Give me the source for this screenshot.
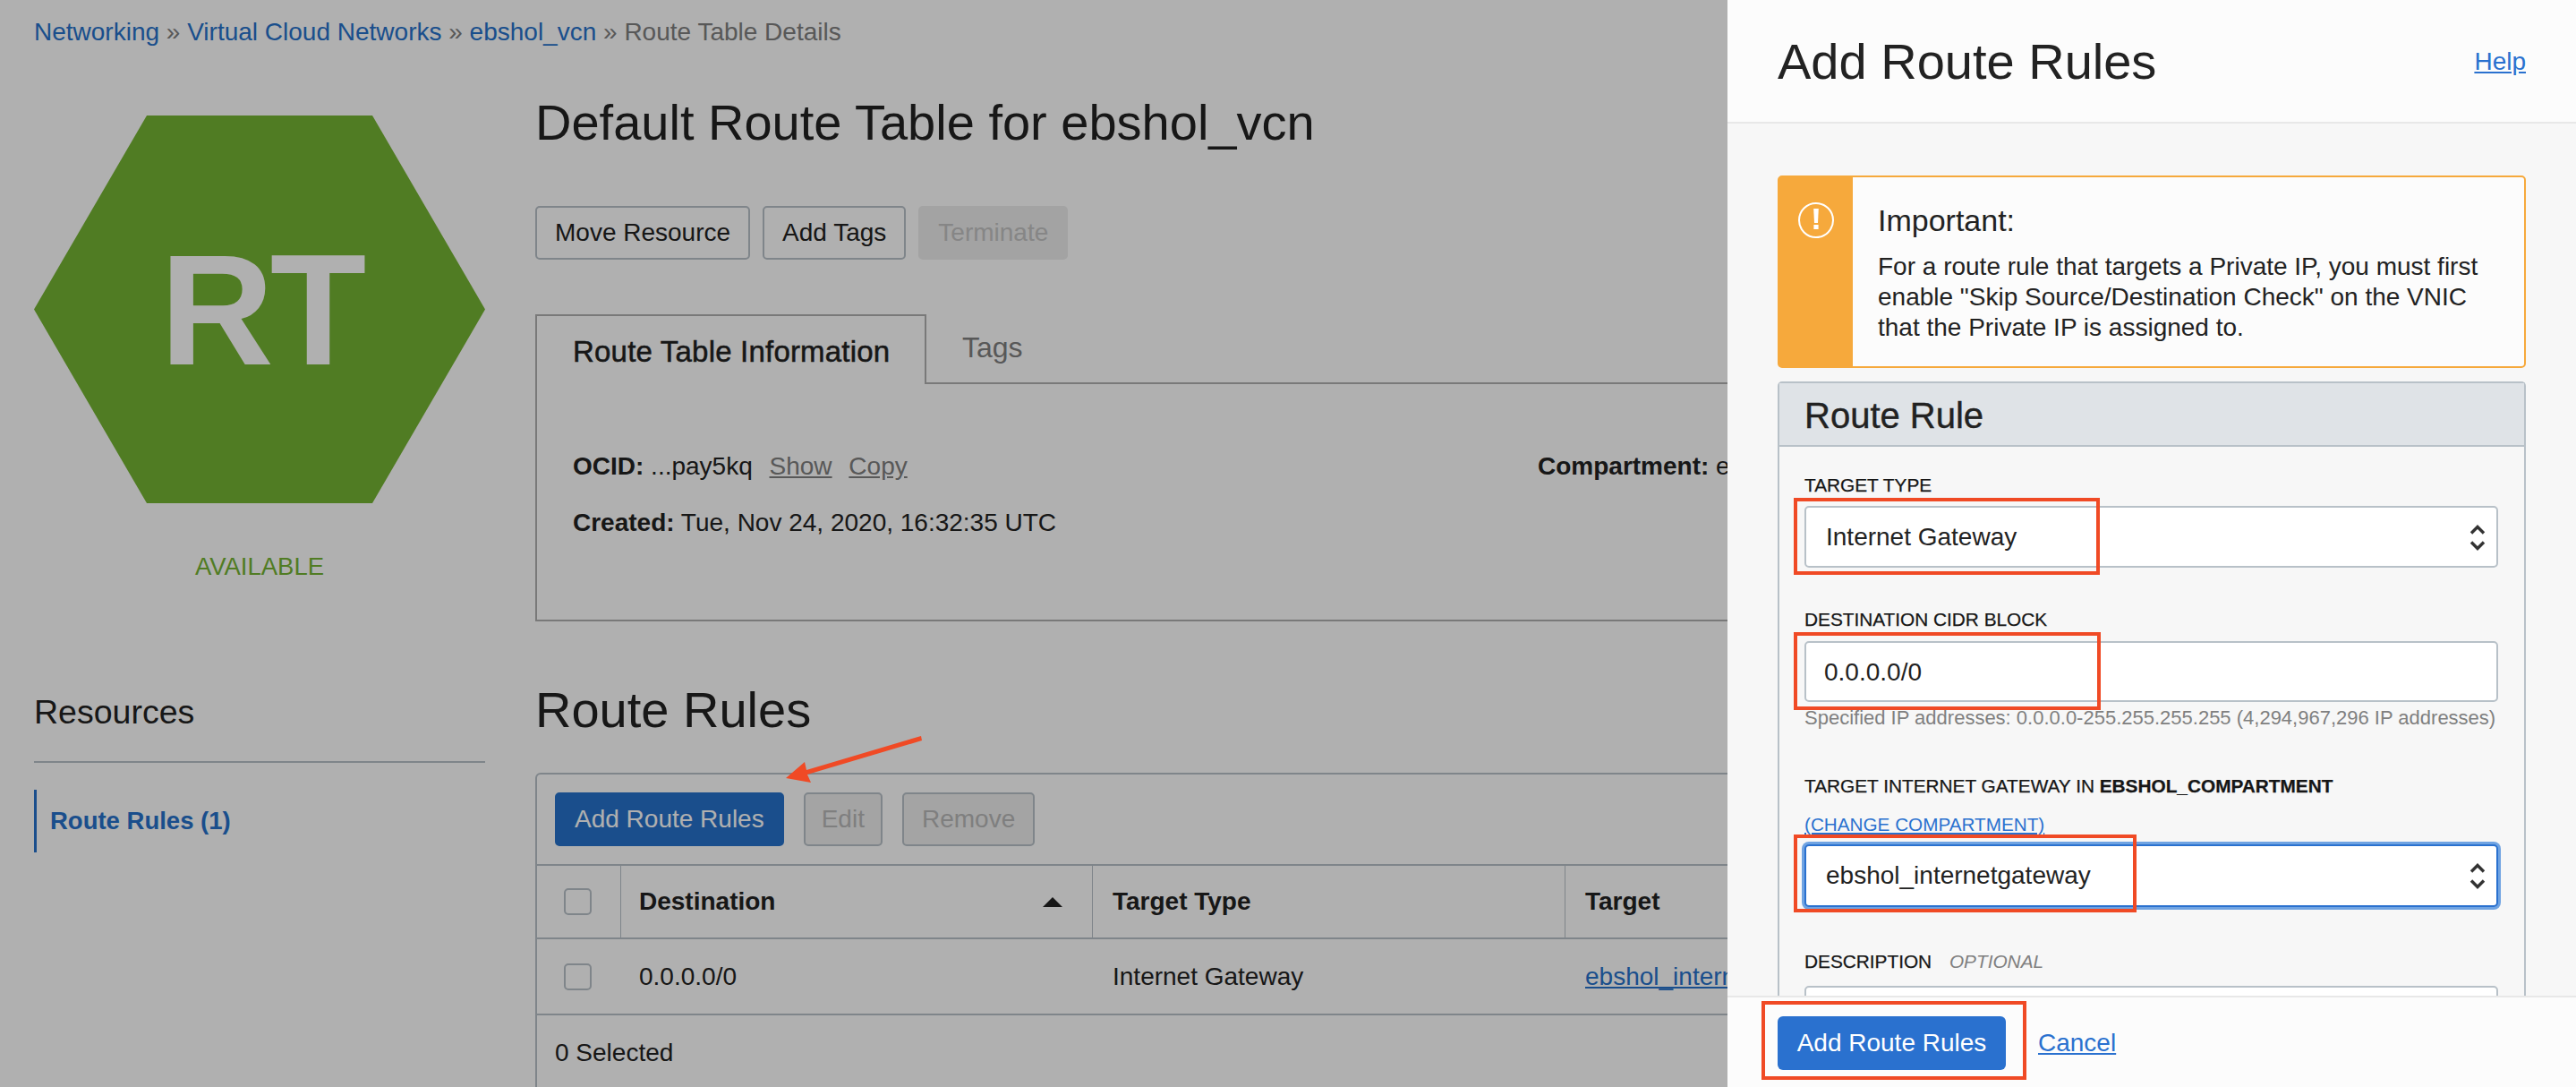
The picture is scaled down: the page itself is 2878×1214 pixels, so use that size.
<div class="page">
	<div class="crumbs">
		<a href="#n">Networking</a> <span>»</span> <a href="#n">Virtual Cloud Networks</a> <span>»</span> <a href="#n">ebshol_vcn</a> <span>» Route Table Details</span>
	</div>

	<div class="main">
		<aside class="side">
			<svg class="hex" viewBox="0 0 504 433" width="504" height="433">
				<polygon points="126,0 378,0 504,216.5 378,433 126,433 0,216.5" fill="#75b433" />
				<text x="254" y="278" text-anchor="middle" class="hex-text">RT</text>
			</svg>
			<div class="state">AVAILABLE</div>
			<h3 class="res">Resources</h3>
			<div class="res-item">Route Rules (1)</div>
		</aside>

		<section class="content">
			<h1>Default Route Table for ebshol_vcn</h1>
			<div class="actions">
				<button class="btn">Move Resource</button>
				<button class="btn">Add Tags</button>
				<button class="btn off">Terminate</button>
			</div>

			<div class="tabs">
				<div class="tab on">Route Table Information</div>
				<div class="tab">Tags</div>
			</div>
			<div class="info">
				<div class="info-row">
					<div class="info-left"><b>OCID:</b> ...pay5kq <u>Show</u> <u>Copy</u></div>
					<div class="comp"><b>Compartment:</b> e</div>
				</div>
				<div class="info-row second"><div><b>Created:</b> Tue, Nov 24, 2020, 16:32:35 UTC</div></div>
			</div>

			<h2>Route Rules</h2>
			<div class="table">
				<div class="toolbar">
					<button class="btn primary">Add Route Rules</button>
					<button class="btn dim edit">Edit</button>
					<button class="btn dim">Remove</button>
				</div>
				<div class="tr head">
					<div class="c0"><span class="check"></span></div>
					<div class="c1">Destination <i class="sort"></i></div>
					<div class="c2">Target Type</div>
					<div class="c3">Target</div>
				</div>
				<div class="tr body">
					<div class="c0"><span class="check"></span></div>
					<div class="c1">0.0.0.0/0</div>
					<div class="c2">Internet Gateway</div>
					<div class="c3"><a href="#n">ebshol_intern</a></div>
				</div>
				<div class="tfoot">0 Selected</div>
			</div>
		</section>
	</div>

	<div class="overlay"></div>

	<svg class="arrow" width="170" height="60" viewBox="0 0 170 60">
		<path d="M0 49 L21 31 L23 40 L151 2 L152 7 L24 45 L28 54 Z" fill="#f04a25" />
	</svg>

	<div class="panel">
		<header class="p-head">
			<h2>Add Route Rules</h2>
			<a href="#n">Help</a>
		</header>
		<div class="p-body">
			<div class="notice">
				<div class="stripe">
					<svg width="40" height="40" viewBox="0 0 40 40">
						<circle cx="20" cy="20" r="19" fill="none" stroke="#fff" stroke-width="2" />
						<path d="M17.2 7h5.6l-.8 16h-4z" fill="#fff" />
						<path d="M17.4 25h5.2v5h-5.2z" fill="#fff" />
					</svg>
				</div>
				<div class="n-text">
					<div class="n-title">Important:</div>
					<p>For a route rule that targets a Private IP, you must first enable "Skip Source/Destination Check" on the VNIC that the Private IP is assigned to.</p>
				</div>
			</div>

			<div class="rule">
				<div class="rule-head">Route Rule</div>
				<div class="fields">
					<label class="lbl">TARGET TYPE</label>
					<div class="control sel">
						Internet Gateway
						<svg class="updown" width="18" height="30" viewBox="0 0 18 30"><path d="M2 9.5l7-7 7 7M2 19.5l7 7 7-7" fill="none" stroke="#333" stroke-width="3.4" /></svg>
						<span class="mark mark1"></span>
					</div>

					<label class="lbl second">DESTINATION CIDR BLOCK</label>
					<div class="control txt">
						0.0.0.0/0
						<span class="mark mark2"></span>
					</div>
					<div class="hint">Specified IP addresses: 0.0.0.0-255.255.255.255 (4,294,967,296 IP addresses)</div>

					<label class="lbl third">TARGET INTERNET GATEWAY IN <b>EBSHOL_COMPARTMENT</b></label>
					<a class="change" href="#n">(CHANGE COMPARTMENT)</a>
					<div class="control sel focus">
						ebshol_internetgateway
						<svg class="updown" width="18" height="30" viewBox="0 0 18 30"><path d="M2 9.5l7-7 7 7M2 19.5l7 7 7-7" fill="none" stroke="#333" stroke-width="3.4" /></svg>
						<span class="mark mark3"></span>
					</div>

					<label class="lbl fourth">DESCRIPTION <em>OPTIONAL</em></label>
					<div class="control txt"></div>
				</div>
			</div>
		</div>
		<footer class="p-foot">
			<button class="submit">Add Route Rules<span class="mark mark4"></span></button>
			<a href="#n">Cancel</a>
		</footer>
	</div>
</div>

<style>
	:global(body) {
		margin: 0;
		background: #fff;
		overflow: hidden;
	}

	.page {
		position: relative;
		width: 2878px;
		height: 1214px;
		overflow: hidden;
		font-family: "Liberation Sans", Arial, sans-serif;
		color: #222;
	}

	a {
		color: #2672cb;
	}

	/* left page */
	.crumbs {
		padding: 18px 0 0 38px;
		height: 84px;
		box-sizing: border-box;
		font-size: 28px;
		line-height: 36px;
		color: #808080;
	}

	.crumbs a {
		text-decoration: none;
	}

	.crumbs span {
		color: #808080;
	}

	.main {
		display: flex;
		padding: 18px 0 0 38px;
		gap: 56px;
	}

	.side {
		width: 504px;
		flex: none;
		padding-top: 27px;
	}

	.hex {
		display: block;
	}

	.hex-text {
		font-size: 176px;
		font-weight: 700;
		letter-spacing: -4px;
		fill: #fff;
	}

	.state {
		margin-top: 53px;
		text-align: center;
		font-size: 27.5px;
		line-height: 36px;
		color: #75b433;
	}

	.res {
		margin: 121px 0 0;
		padding-bottom: 32px;
		border-bottom: 2px solid #b8c1c8;
		font-size: 37.5px;
		line-height: 46px;
		font-weight: 400;
	}

	.res-item {
		margin-top: 30px;
		height: 70px;
		line-height: 70px;
		border-left: 3px solid #2672cb;
		padding-left: 15px;
		font-size: 27.5px;
		font-weight: 700;
		color: #2672cb;
	}

	.content {
		width: 1500px;
		flex: none;
	}

	h1,
	.content h2 {
		margin: 0;
		font-size: 56px;
		line-height: 70px;
		font-weight: 400;
	}

	.actions {
		display: flex;
		gap: 14px;
		margin-top: 58px;
	}

	.btn {
		height: 60px;
		padding: 0 20px;
		box-sizing: border-box;
		background: #fff;
		border: 2px solid #b8c1c8;
		border-radius: 5px;
		font: 28px "Liberation Sans", Arial, sans-serif;
		color: #222;
	}

	.btn.off {
		background: #ececec;
		border-color: #ececec;
		color: #c2c2c2;
	}

	.btn.dim {
		background: #eee;
		color: #b8b8b8;
	}

	.btn.edit {
		padding: 0 18px;
	}

	.btn.primary {
		background: #2672cb;
		border-color: #2672cb;
		color: #fff;
	}

	.tabs {
		display: flex;
		margin-top: 61px;
		height: 78px;
	}

	.tab {
		flex: 1;
		padding-left: 40px;
		line-height: 74px;
		font-size: 32px;
		color: #808080;
		border-bottom: 2px solid #b0b0b0;
	}

	.tab.on {
		flex: none;
		width: 437px;
		box-sizing: border-box;
		padding-left: 40px;
		color: #222;
		font-size: 33px;
		letter-spacing: 0.2px;
		line-height: 79px;
		border: 2px solid #b0b0b0;
		border-bottom: none;
		-webkit-text-stroke: 0.5px #222;
	}

	.info {
		height: 265px;
		box-sizing: border-box;
		border-left: 2px solid #b0b0b0;
		border-bottom: 2px solid #b0b0b0;
		padding: 72px 0 0 40px;
		font-size: 28px;
		line-height: 40px;
	}

	.info-row {
		display: flex;
	}

	.info-left {
		width: 1078px;
		flex: none;
	}

	.comp {
		white-space: nowrap;
	}

	.info u {
		color: #808080;
		margin-left: 11px;
	}

	.second.info-row {
		margin-top: 23px;
	}

	.content h2 {
		margin-top: 64px;
	}

	.table {
		margin-top: 35px;
		border: 2px solid #b8c1c8;
		border-radius: 6px 0 0 0;
		height: 500px;
	}

	.toolbar {
		display: flex;
		gap: 22px;
		padding: 20px 0 0 20px;
		height: 80px;
	}

	.tr {
		display: flex;
		border-top: 2px solid #b8c1c8;
		font-size: 28px;
	}

	.tr.head {
		height: 80px;
		font-weight: 700;
	}

	.tr.body {
		height: 83px;
	}

	.tr > div {
		display: flex;
		align-items: center;
		flex: none;
		box-sizing: border-box;
		padding-left: 22px;
	}

	.tr.head > div {
		border-right: 1px solid #b8c1c8;
	}

	.tr > .c0 {
		width: 94px;
		padding-left: 30px;
	}

	.tr > .c1 {
		width: 527px;
		padding-left: 20px;
		justify-content: space-between;
		padding-right: 33px;
	}

	.tr > .c2 {
		width: 528px;
	}

	.tr > .c3 {
		width: 400px;
	}

	.check {
		width: 31px;
		height: 30px;
		box-sizing: border-box;
		border: 2px solid #b8c1c8;
		border-radius: 5px;
		background: #fff;
	}

	.sort {
		width: 0;
		height: 0;
		border: 11px solid transparent;
		border-top: none;
		border-bottom: 11px solid #222;
	}

	.tfoot {
		border-top: 2px solid #b8c1c8;
		padding: 24px 0 0 20px;
		font-size: 28px;
		line-height: 36px;
	}

	.overlay {
		position: absolute;
		inset: 0;
		background: rgba(0, 0, 0, 0.31);
	}

	.arrow {
		position: absolute;
		left: 878px;
		top: 820px;
	}

	/* side panel */
	.panel {
		position: absolute;
		top: 0;
		right: 0;
		bottom: 0;
		width: 948px;
		display: flex;
		flex-direction: column;
		background: #f7f7f7;
	}

	.p-head {
		height: 138px;
		flex: none;
		box-sizing: border-box;
		display: flex;
		justify-content: space-between;
		align-items: center;
		padding: 2px 56px 0;
		background: #fcfcfc;
		border-bottom: 2px solid #e8e8e8;
	}

	.p-head h2 {
		margin: 0;
		font-size: 56px;
		line-height: 70px;
		font-weight: 400;
	}

	.p-head a {
		font-size: 28px;
	}

	.p-body {
		flex: 1;
		min-height: 0;
		overflow: hidden;
		padding: 58px 56px 0;
	}

	.notice {
		display: flex;
		height: 215px;
		box-sizing: border-box;
		border: 2px solid #f6a93c;
		border-radius: 5px;
		background: #fcfcfc;
	}

	.stripe {
		width: 82px;
		flex: none;
		background: #f6a93c;
		display: flex;
		justify-content: center;
		padding-top: 28px;
		box-sizing: border-box;
	}

	.n-text {
		padding: 28px 0 0 28px;
	}

	.n-title {
		font-size: 34px;
		line-height: 40px;
	}

	.n-text p {
		margin: 15px 0 0;
		font-size: 28px;
		line-height: 34px;
		width: 690px;
	}

	.rule {
		margin-top: 15px;
		border: 2px solid #b8c1c8;
		border-bottom: none;
		border-radius: 5px 5px 0 0;
	}

	.rule-head {
		height: 71px;
		box-sizing: border-box;
		background: #dfe3e7;
		border-bottom: 2px solid #b8c1c8;
		padding-left: 28px;
		font-size: 40px;
		line-height: 73px;
		-webkit-text-stroke: 0.4px #222;
	}

	.fields {
		padding: 31px 29px 0 28px;
	}

	.lbl {
		display: block;
		font-size: 20.8px;
		line-height: 24px;
		margin-bottom: 11px;
		color: #161616;
		-webkit-text-stroke: 0.25px #161616;
	}

	.lbl.second {
		margin-top: 46px;
		margin-bottom: 12px;
	}

	.lbl.third {
		margin-top: 52px;
		margin-bottom: 19px;
	}

	.lbl.fourth {
		margin-top: 49px;
		margin-bottom: 15px;
	}

	.lbl em {
		margin-left: 14px;
		color: #808080;
		-webkit-text-stroke: 0;
	}

	.control {
		position: relative;
		height: 69px;
		box-sizing: border-box;
		border: 2px solid #b8c1c8;
		border-radius: 5px;
		background: #fff;
		font-size: 28px;
		line-height: 65px;
		padding-left: 22px;
		color: #222;
	}

	.control.txt {
		padding-left: 20px;
		height: 68px;
	}

	.control.focus {
		height: 70px;
		border-color: #2a71cf;
		box-shadow: 0 0 0 3px #6fa3e2;
	}

	.updown {
		position: absolute;
		right: 12px;
		top: 19px;
	}

	.mark {
		position: absolute;
		box-sizing: border-box;
		border: 4px solid #f04a25;
		pointer-events: none;
	}

	.mark1 {
		left: -14px;
		top: -11px;
		width: 342px;
		height: 86px;
	}

	.mark2 {
		left: -14px;
		top: -12px;
		width: 343px;
		height: 87px;
	}

	.mark3 {
		left: -14px;
		top: -13px;
		width: 383px;
		height: 87px;
	}

	.hint {
		margin-top: 6px;
		font-size: 22px;
		line-height: 24px;
		color: #808080;
	}

	.change {
		display: block;
		font-size: 20.7px;
		line-height: 24px;
		margin-bottom: 10px;
		color: #2a71cf;
	}

	.p-foot {
		height: 102px;
		flex: none;
		box-sizing: border-box;
		display: flex;
		gap: 36px;
		padding: 21px 0 0 56px;
		align-items: flex-start;
		background: #fcfcfc;
		border-top: 2px solid #e8e8e8;
	}

	.p-foot a,
	.p-head a {
		color: #2a71cf;
	}

	.submit {
		position: relative;
		width: 255px;
		height: 60px;
		border: none;
		border-radius: 6px;
		background: #2a71cf;
		color: #fff;
		font: 28px "Liberation Sans", Arial, sans-serif;
	}

	.p-foot a {
		font-size: 28px;
		line-height: 60px;
	}

	.mark4 {
		left: -18px;
		top: -17px;
		width: 296px;
		height: 88px;
	}
</style>
